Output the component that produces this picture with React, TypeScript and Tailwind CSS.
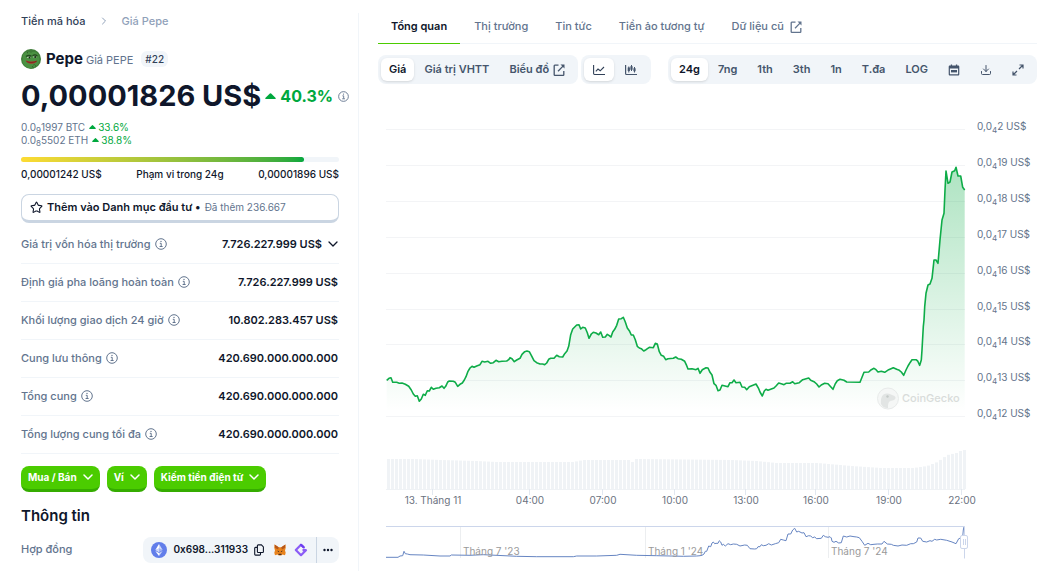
import type { ReactNode } from "react"
import { ChevronRight, Download, Star } from "lucide-react"

const stats = [
  { label: "Giá trị vốn hóa thị trường", value: "7.726.227.999 US$", expandable: true },
  { label: "Định giá pha loãng hoàn toàn", value: "7.726.227.999 US$" },
  { label: "Khối lượng giao dịch 24 giờ", value: "10.802.283.457 US$" },
  { label: "Cung lưu thông", value: "420.690.000.000.000" },
  { label: "Tổng cung", value: "420.690.000.000.000" },
  { label: "Tổng lượng cung tối đa", value: "420.690.000.000.000" },
]

const tabs = ["Tổng quan", "Thị trường", "Tin tức", "Tiền ảo tương tự", "Dữ liệu cũ"]
const ranges = ["24g", "7ng", "1th", "3th", "1n", "T.đa", "LOG"]

const yLabels = ["2", "19", "18", "17", "16", "15", "14", "13", "12"]

const xLabels = [
  { x: 433, text: "13. Tháng 11" },
  { x: 530, text: "04:00" },
  { x: 603, text: "07:00" },
  { x: 675, text: "10:00" },
  { x: 746, text: "13:00" },
  { x: 816, text: "16:00" },
  { x: 889, text: "19:00" },
  { x: 962, text: "22:00" },
]

type Series = { x: number; y: number; points: string }

// Points are stored in thirds of a chart unit, relative to the segment origin
const priceSeries: Series[] = [
  {
    x: 380,
    y: 300,
    points:
      "20,241 27,235 33,233 38,247 50,247 58,250 66,249 76,253 86,259 94,270 100,282 106,289 112,287 118,304 124,297 130,283 136,286 142,272 148,273 154,262 160,268 168,265 178,263 186,258 192,265 197,259 203,246 208,243 220,244 226,247 233,259 240,253 247,249 253,240 258,230 264,214 270,204 276,199 282,202 290,198 300,194 306,184 314,186 324,184 332,190 340,188 348,181 356,185 366,184 380,183 386,179 390,173 396,176 403,185 410,180 420,175 426,163 434,155 441,153 448,155 454,166 462,182 470,188 480,192 488,192 494,194 500,189 506,178 512,175 522,175 530,166 538,170 548,171 554,161 561,153 566,139 572,104 578,87 584,81 590,75 597,74 602,87 608,82 616,84 622,98 627,115 634,102 640,97 648,99 656,104 662,96 668,112 676,111 682,103 688,107 693,111 698,96 704,88 710,76 716,57 724,56 730,52 736,66 742,84 748,92 754,105 760,105 766,119 772,139 778,144 784,146 791,153 798,149 808,142 820,143 826,130 832,132 838,155",
  },
  {
    x: 660,
    y: 300,
    points:
      "4,166 11,169 17,179 24,176 40,175 47,171 54,176 64,178 74,184 80,197 84,207 96,206 108,209 114,205 120,220 127,209 138,203 144,204 150,217 156,225 162,251 168,256 174,272 180,270 186,256 204,260 210,248 216,248 222,240 228,248 240,247 246,261 254,262 260,269 268,260 288,252 296,266 300,276 307,288 313,273 318,268 324,271 342,264 348,258 356,249 366,252 372,254 378,250 390,250 398,245 404,251 418,248 428,239 446,234 452,241 462,245 470,252 477,261 485,254 494,250 504,251 512,260 519,268 526,251 532,242 540,238 552,241 560,246 600,247 606,232 612,217 626,216 634,209 642,205 648,209 654,216 664,214 674,217 686,209 700,203 710,208 718,211 724,216 731,226 738,210 744,198 750,188 756,179 768,179 773,183 779,196 784,180 786,150 790,80",
  },
  {
    x: 840,
    y: 100,
    points:
      "252,660 254,620 258,580 264,555 270,552 276,535 282,480 288,480 294,490 300,420 306,360 312,340 315,270 318,213 324,250 330,246 336,216 344,212 348,202 354,228 362,228 368,262 374,270",
  },
]

const navigatorSeries: Series[] = [
  {
    x: 370,
    y: 430,
    points:
      "48,382 84,382 90,378 98,377 102,364 106,371 112,372 120,374 160,375 210,378 240,378 244,375 300,376 340,374 440,379 500,380 610,380 620,378 680,378 740,376 750,373 800,376 860,377 940,379 980,378",
  },
  {
    x: 700,
    y: 430,
    points:
      "0,377 6,376 12,372 16,364 20,364 26,348 32,350 36,339 40,336 44,341 48,340 54,340 58,332 62,336 66,346 70,343 76,348 84,341 92,344 100,342 110,343 120,348 134,345 142,346 150,356 164,357 170,356 174,350 180,350 184,344 190,347 198,346 206,341 214,345 226,341 236,338 242,328 250,330 258,332 264,312 272,312 278,300 284,295 290,306 296,304 300,306 306,309 312,308 318,320 326,317 332,318 338,323 344,321 350,326 364,325 370,316 376,320 384,322 390,320 394,324 396,334 402,337 408,334 416,339 424,338 430,318 440,321 450,318 462,320 470,321 478,323 486,334 494,346 504,340 512,344 522,343 532,342 546,342 552,334 562,342 574,343 580,346 594,348 606,345 620,346 632,341 640,341 650,336 654,324 662,324 668,334 680,336 690,332 696,334 704,328 710,330 722,328 740,331 756,336 768,341 776,326 782,324 788,320 790,300 792,290",
  },
]

// [x, top] of the volume silhouette
const volume = [
  [387, 459], [412, 459], [440, 460], [475, 461], [495, 462], [572, 462], [582, 460],
  [628, 460], [631, 462], [634, 459], [730, 460], [755, 461], [775, 463], [816, 463],
  [850, 466], [880, 468], [912, 468], [926, 466], [936, 462], [946, 455], [955, 453],
  [961, 450], [966, 450],
]

function toPoints(series: Series[]) {
  return series
    .flatMap((s) =>
      s.points.split(" ").map((p) => {
        const [x, y] = p.split(",").map(Number)
        return `${(s.x + x / 3).toFixed(1)},${(s.y + y / 3).toFixed(1)}`
      })
    )
    .join(" ")
}

function volumeTop(x: number) {
  const i = Math.max(1, volume.findIndex((v) => v[0] >= x))
  const [x0, y0] = volume[i - 1]
  const [x1, y1] = volume[i]
  return y0 + ((y1 - y0) * (x - x0)) / (x1 - x0)
}

const pricePoints = toPoints(priceSeries)
const navigatorPoints = toPoints(navigatorSeries)
const bars = Array.from({ length: 145 }, (_, i) => 387 + i * 4)

function InfoIcon({ className }: { className: string }) {
  return (
    <svg viewBox="0 0 12 12" className={`shrink-0 ${className}`} fill="none" stroke="currentColor">
      <circle cx="6" cy="6" r="5.3" strokeWidth="1" />
      <path d="M4.8 5.3h1.4v3M4.6 8.5h3" strokeWidth="1" />
      <circle cx="6" cy="3.4" r="0.7" fill="currentColor" stroke="none" />
    </svg>
  )
}

function UpArrow({ className }: { className: string }) {
  return (
    <svg viewBox="0 0 12 7" className={`shrink-0 ${className}`} fill="currentColor">
      <path d="M5.3.5.6 5.2C0 5.9.3 6.8 1.2 6.8h9.6c.9 0 1.2-.9.6-1.6L6.7.5a1 1 0 0 0-1.4 0z" />
    </svg>
  )
}

function Chevron({ strokeWidth }: { strokeWidth: number }) {
  return (
    <svg viewBox="0 0 10 6" className="w-[10px] shrink-0" fill="none" stroke="currentColor" strokeWidth={strokeWidth} strokeLinecap="round" strokeLinejoin="round">
      <path d="m1 1 4 4 4-4" />
    </svg>
  )
}

function ExternalIcon() {
  return (
    <svg viewBox="0 0 12 12" className="size-3 shrink-0" fill="none" stroke="currentColor" strokeWidth="1.3">
      <path d="M5.5 1.2H1.800c-.4 0-.6.2-.6.6v8.9c0 .4.2.6.6.6h8.4c.4 0 .6-.2.6-.6V7" />
      <path d="M5 7.2 10.5 1.6" />
      <path d="M7.500.6h4v4z" fill="currentColor" stroke="none" />
    </svg>
  )
}

function CopyIcon() {
  return (
    <svg viewBox="0 0 10 12" className="h-3 w-[10px]" fill="none" stroke="currentColor" strokeWidth="1.1">
      <path d="M4.2.9h3.200l2 2v4.800c0 .5-.3.8-.8.8H4.200c-.5 0-.8-.3-.8-.8v-6c0-.5.3-.8.8-.8z" />
      <path d="M3.200 3.400H1.500c-.5 0-.8.3-.8.8v6.100c0 .5.3.8.8.8h4.200c.5 0 .8-.3.8-.8V8.800" />
    </svg>
  )
}

function DotsIcon() {
  return (
    <svg viewBox="0 0 10 4" className="w-[10px]" fill="currentColor">
      <circle cx="1.5" cy="2" r="1.2" />
      <circle cx="5" cy="2" r="1.2" />
      <circle cx="8.5" cy="2" r="1.2" />
    </svg>
  )
}

function PepeLogo() {
  return (
    <svg viewBox="0 0 20 20" className="size-5 shrink-0">
      <circle cx="10" cy="10" r="10" fill="#3f7d38" />
      <path d="M2 5.500C5 2 8 2.500 10 4c2-2 5-1.500 7 1l1.500 5-1 5-5 4.500C7 20 3 17 1.500 13z" fill="#4b9142" />
      <path d="M5 7.500c2-1.600 4-1.400 5.500-.2M11.500 6.700c1.600-1 3.500-.9 4.900.2" stroke="#24491f" strokeWidth="1.300" fill="none" />
      <ellipse cx="8" cy="8.400" rx="2" ry=".7" fill="#c9d6c3" />
      <ellipse cx="13.800" cy="7.900" rx="1.800" ry=".7" fill="#c9d6c3" />
      <circle cx="8.500" cy="8.400" r="1" fill="#182616" />
      <circle cx="14.200" cy="7.900" r="1" fill="#182616" />
      <path d="M4.800 11.200c3 1.500 7.500 1.800 11.200.3-.2 2-2.500 3.200-5.500 3.200-3.200 0-5.200-1.300-5.700-3.500z" fill="#b0382c" />
      <path d="M5.500 12.600c3.300 1.200 7 1.100 10.200-.3" stroke="#5c1d18" strokeWidth=".6" fill="none" />
      <path d="M11 17.500l1.500 1M14 16.500l1 .8M6 4l1-.6M12.500 16l1-.5" stroke="#24491f" strokeWidth=".8" />
    </svg>
  )
}

function LineChartIcon() {
  return (
    <svg viewBox="0 0 14 12" className="h-3 w-3.5 text-slate-700" fill="none" stroke="currentColor" strokeWidth="1.1">
      <path d="M1.600 1v8.600c0 .6.300.9.900.9H13" />
      <path d="M3.800 7.300 6 5l2.200 1.800L12 3" />
    </svg>
  )
}

function CandleIcon() {
  return (
    <svg viewBox="0 0 14 12" className="h-3 w-3.5" fill="none" stroke="currentColor" strokeWidth="1.2">
      <path d="M1.600 1v8.600c0 .6.300.9.900.9H13" />
      <path d="M4.800 2.500v6M7.500 1v6M10.500 3v5.500" strokeWidth="1" />
      <path d="M4.800 3.500v3.500M7.500 2.300v3.500M10.500 4.300v3" strokeWidth="2.2" />
    </svg>
  )
}

function CalendarIcon() {
  return (
    <svg viewBox="0 0 12 12" className="size-3" fill="currentColor">
      <path fillRule="evenodd" d="M2.800.5h1.300v1h3.800v-1h1.300v1h.8c.8 0 1.300.5 1.300 1.300v7.400c0 .8-.5 1.300-1.300 1.300H2c-.8 0-1.300-.5-1.300-1.300V2.800C.7 2 1.200 1.500 2 1.500h.8zM1.900 4.400v5.300c0 .4.2.6.6.6h7c.4 0 .6-.2.6-.6V4.400z" />
      <path d="M3 6h6v2.400H3z" />
    </svg>
  )
}

function ExpandIcon() {
  return (
    <svg viewBox="0 0 12 12" className="size-3" fill="none" stroke="currentColor" strokeWidth="1.2">
      <path d="M7.500 1H11v3.500M11 1 7 5M4.500 11H1V7.500M1 11l4-4" />
    </svg>
  )
}

function EthereumIcon() {
  return (
    <svg viewBox="0 0 16 16" className="size-4">
      <circle cx="8" cy="8" r="8" fill="#627eea" />
      <path d="M8 2v4.500l3.700 1.600z" fill="#fff" opacity=".7" />
      <path d="M8 2 4.300 8.100 8 6.500z" fill="#fff" />
      <path d="m8 10.300 3.700-2.200L8 6.500z" fill="#fff" opacity=".4" />
      <path d="M4.300 8.100 8 10.300V6.500z" fill="#fff" opacity=".7" />
      <path d="M8 11.100V14l3.700-5.100z" fill="#fff" opacity=".7" />
      <path d="M8 14v-2.900L4.300 8.900z" fill="#fff" />
    </svg>
  )
}

function FoxIcon() {
  return (
    <svg viewBox="0 0 12 12" className="size-3">
      <path d="M.6.6 4.700 3.200h2.600L11.400.6l.4 3-.8 3 .7 2.200-.7 2.400-2.500-.7-1.300 1H4.800l-1.300-1-2.500.7-.7-2.400L1 6.600.2 3.600z" fill="#e8831d" />
      <path d="M.6.6 4.700 3.200l-.6 2.300L1.200 4zM11.400.6 7.300 3.200l.6 2.300L10.800 4z" fill="#b5561b" />
      <path d="M3 6.800l1.900.3.300 1.200zM9 6.800l-1.900.3-.3 1.200z" fill="#3b2a20" />
      <path d="M4.600 9.700h2.800l.2 1.300H4.400z" fill="#4a3324" />
    </svg>
  )
}

function TerminalIcon() {
  return (
    <svg viewBox="0 0 14 14" className="size-3.5" fill="none">
      <path d="M9.600 4.200 7 1.800 1.800 7 7 12.200 12 7.200H8.500" stroke="#8b5cf6" strokeWidth="2.2" strokeLinejoin="round" />
      <path d="M7 1.800 9.800 4.400" stroke="#6d3df0" strokeWidth="2.2" strokeLinecap="round" />
    </svg>
  )
}

function Segmented({ children }: { children: ReactNode }) {
  return <div className="flex items-center rounded-lg bg-slate-100 p-[3px] text-slate-600">{children}</div>
}

function Segment({ active, label, children }: { active?: boolean; label?: string; children: ReactNode }) {
  return (
    <button
      aria-label={label}
      aria-pressed={active}
      className={`flex h-[23px] items-center gap-1 rounded-md text-[11px] font-semibold whitespace-nowrap ${
        active ? "bg-white px-2 text-slate-900 shadow-sm" : "px-[10px]"
      }`}
    >
      {children}
    </button>
  )
}

function GreenButton({ children }: { children: ReactNode }) {
  return (
    <button className="flex h-[26px] items-center gap-[6px] rounded-lg border-b-[3px] border-[#35ac00] bg-[#4bcc00] px-[7px] text-[10px] font-bold text-white">
      {children}
      <Chevron strokeWidth={1.5} />
    </button>
  )
}

function PriceChart() {
  return (
    <svg viewBox="378 96 659 472" className="mt-3 w-full font-['Inter',sans-serif]" role="img" aria-label="Giá Pepe 24g">
      <defs>
        <linearGradient id="area" gradientUnits="userSpaceOnUse" x1="0" y1="165" x2="0" y2="412">
          <stop offset="0" stopColor="#00a83e" stopOpacity="0.32" />
          <stop offset="1" stopColor="#00a83e" stopOpacity="0" />
        </linearGradient>
      </defs>

      {yLabels.map((label, i) => {
        const y = Math.round(129 + i * 35.9) + 0.5
        return (
          <g key={label}>
            <path d={`M386 ${y}H965`} stroke="#f3f4f6" />
            <text x="977" y={y} fontSize="10" fill="#64748b">
              0,0
              <tspan dy="3" fontSize="8">4</tspan>
              <tspan dy="-3">{label} US$</tspan>
            </text>
          </g>
        )
      })}

      <polygon points={`386.7,416 ${pricePoints} 964.7,416`} fill="url(#area)" />
      <polyline points={pricePoints} fill="none" stroke="#0eac48" strokeWidth="1.6" strokeLinejoin="round" />

      {/* Watermark */}
      <g fill="#d8dcda">
        <circle cx="888" cy="398.5" r="10.5" fill="#f5f7f6" stroke="#e8ebea" />
        <path d="M881 404c-.5-6 1-10.500 6-10.500 3 0 5 1.500 7.500 2.500 1.500 1 1.500 3-.5 4-2 .8-4.500.5-5.500 3-.5 1.500-.5 3-.5 5-3 .3-6-1.500-7-4z" fill="#e2e5e4" />
        <circle cx="887.5" cy="396.5" r="1.2" fill="#c4cac7" />
        <text x="902" y="402" fontSize="11" fontWeight="500">CoinGecko</text>
      </g>

      {bars.map((x) => (
        <rect key={x} x={x} y={volumeTop(x)} width="3" height={489 - volumeTop(x)} fill="#f0f3f6" />
      ))}
      <path d="M386 489.5H965" stroke="#eff2f5" />
      {xLabels.map(({ x, text }) => (
        <g key={text}>
          <path d={`M${x - 0.5} 489v6`} stroke="#e2e8f0" />
          <text x={x} y="504" fontSize="10" textAnchor="middle" fill="#6b7280">{text}</text>
        </g>
      ))}

      {/* Navigator */}
      <path d="M460.5 527v31M645.5 527v31M828.5 527v31" stroke="#eceef0" />
      <polyline points={navigatorPoints} fill="none" stroke="#6685c2" />
      <g fontSize="10" fill="#9a9a9a">
        <text x="463" y="555">Tháng 7 &apos;23</text>
        <text x="648" y="555">Tháng 1 &apos;24</text>
        <text x="831" y="555">Tháng 7 &apos;24</text>
      </g>
      <path d="M386 526.5H964.5V558.5" stroke="#ccd6eb" fill="none" />
      <rect x="960.5" y="535.5" width="7" height="13" rx="1.5" fill="#fff" stroke="#ccd6eb" />
      <path d="M963.5 539v6M965.5 539v6" stroke="#ccd6eb" />
    </svg>
  )
}

export default function App() {
  return (
    <div className="flex min-h-screen bg-white font-['Inter',sans-serif] text-slate-900">
      <aside className="mt-[13px] w-[359px] shrink-0 border-r border-slate-100 pr-[19px] pl-[21px]">
        <nav className="flex h-4 items-center gap-3 text-[11px] font-medium">
          <a href="#" className="text-slate-700">Tiền mã hóa</a>
          <ChevronRight className="size-3 text-slate-400" />
          <span className="text-slate-400">Giá Pepe</span>
        </nav>

        <div className="mt-5 flex h-5 items-center">
          <PepeLogo />
          <h1 className="ml-[5px] flex items-baseline gap-[3px] text-[15px] leading-5 font-bold">
            Pepe <span className="text-[11px] font-normal text-slate-500">Giá PEPE</span>
          </h1>
          <span className="ml-2 rounded-md bg-slate-100 px-1 text-[10px] leading-4 font-medium text-slate-700">#22</span>
        </div>

        <div className="mt-2 flex h-[38px] items-center whitespace-nowrap">
          <span className="text-[29px] font-bold">0,00001826 US$</span>
          <UpArrow className="ml-1 w-[11px] text-[#00a83e]" />
          <span className="ml-1 text-base font-bold text-[#00a83e]">40.3%</span>
          <InfoIcon className="ml-[5px] size-[11px] text-slate-500" />
        </div>

        <div className="mt-[6px] text-[10px] leading-[13px] text-slate-500">
          <div className="flex items-center">
            <span>0.0<sub className="text-[8px] leading-none">9</sub>1997 BTC</span>
            <UpArrow className="mr-[2px] ml-1 w-[7px] text-[#00a83e]" />
            <span className="text-[#00a83e]">33.6%</span>
          </div>
          <div className="flex items-center">
            <span>0.0<sub className="text-[8px] leading-none">8</sub>5502 ETH</span>
            <UpArrow className="mr-[2px] ml-1 w-[7px] text-[#00a83e]" />
            <span className="text-[#00a83e]">38.8%</span>
          </div>
        </div>

        <div className="mt-[10px] h-[5px] rounded-full bg-slate-100">
          <div className="h-full w-[89%] rounded-full bg-linear-to-r from-[#fddb33] to-[#00a83e]" />
        </div>
        <div className="mt-1 flex justify-between text-[10px] leading-4 font-medium">
          <span>0,00001242 US$</span>
          <span>Phạm vi trong 24g</span>
          <span>0,00001896 US$</span>
        </div>

        <button className="mt-3 flex h-[29px] w-full items-center rounded-lg border border-b-[3px] border-slate-300 px-2 text-[11px] font-semibold">
          <Star className="mr-1 size-[13px]" strokeWidth={2} />
          Thêm vào Danh mục đầu tư •
          <span className="ml-1 text-[10px] font-normal text-slate-500">Đã thêm 236.667</span>
        </button>

        <table className="mt-[2px] w-full text-[11px]">
          <tbody>
            {stats.map((stat) => (
              <tr key={stat.label} className="h-[38px] border-b border-slate-100">
                <th scope="row" className="text-left font-medium text-slate-500">
                  <span className="flex items-center gap-1">
                    {stat.label}
                    <InfoIcon className="size-3" />
                  </span>
                </th>
                <td className="pr-px font-semibold">
                  <span className="flex items-center justify-end gap-[6px]">
                    {stat.value}
                    {stat.expandable && <Chevron strokeWidth={1.3} />}
                  </span>
                </td>
              </tr>
            ))}
          </tbody>
        </table>

        <div className="mt-3 flex gap-[7px]">
          <GreenButton>Mua / Bán</GreenButton>
          <GreenButton>Ví</GreenButton>
          <GreenButton>Kiếm tiền điện tử</GreenButton>
        </div>

        <h2 className="mt-[14px] text-[15px] leading-5 font-semibold">Thông tin</h2>
        <div className="mt-[11px] flex items-center justify-between">
          <span className="text-[11px] font-medium text-slate-500">Hợp đồng</span>
          <div className="flex h-[26px] items-center rounded-lg bg-slate-100 pl-2 text-[10px] font-semibold">
            <EthereumIcon />
            <span className="ml-[6px]">0x698...311933</span>
            <button aria-label="Sao chép" className="ml-[6px]"><CopyIcon /></button>
            <button aria-label="MetaMask" className="ml-[10px]"><FoxIcon /></button>
            <button aria-label="GeckoTerminal" className="ml-2"><TerminalIcon /></button>
            <button aria-label="Thêm" className="ml-2 h-full border-l border-slate-300 px-[6px]"><DotsIcon /></button>
          </div>
        </div>
      </aside>

      <main className="min-w-0 flex-1 pr-1 pl-[19px]">
        <nav className="flex h-11 items-end gap-px border-b border-slate-100 text-[11px] font-medium text-slate-500">
          {tabs.map((tab, i) => (
            <a
              key={tab}
              href="#"
              className={`-mb-px flex h-[34px] items-center gap-[6px] border-b px-[13px] ${
                i === 0 ? "border-[#4bcc00] font-semibold text-slate-900" : "border-transparent"
              }`}
            >
              {tab}
              {i === 4 && <ExternalIcon />}
            </a>
          ))}
        </nav>

        <div className="mt-[11px] flex h-[29px] justify-between">
          <div className="flex gap-[3px]">
            <Segmented>
              <Segment active>Giá</Segment>
              <Segment>Giá trị VHTT</Segment>
              <Segment>
                Biểu đồ <ExternalIcon />
              </Segment>
            </Segmented>
            <Segmented>
              <Segment active label="Biểu đồ đường"><LineChartIcon /></Segment>
              <Segment label="Biểu đồ nến"><CandleIcon /></Segment>
            </Segmented>
          </div>
          <Segmented>
            {ranges.map((range, i) => (
              <Segment key={range} active={i === 0}>{range}</Segment>
            ))}
            <Segment label="Chọn ngày"><CalendarIcon /></Segment>
            <Segment label="Tải xuống"><Download className="size-3" /></Segment>
            <Segment label="Toàn màn hình"><ExpandIcon /></Segment>
          </Segmented>
        </div>

        <PriceChart />
      </main>
    </div>
  )
}
